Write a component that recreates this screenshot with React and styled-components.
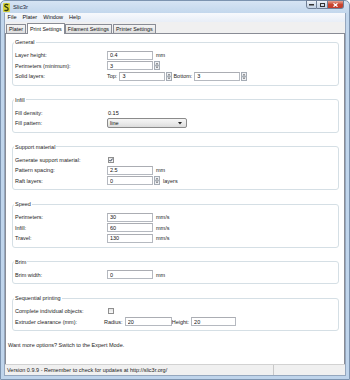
import React from 'react'
import styled, { createGlobalStyle } from 'styled-components'

const GlobalStyle = createGlobalStyle`
  html, body { margin: 0; padding: 0; background: #fff; }
  body {
    width: 350px;
    height: 380px;
    overflow: hidden;
    font-family: "Liberation Sans", Arial, sans-serif;
    color: #222;
  }
`

function AppIcon() {
    return (
        <svg width="7" height="9" viewBox="0 0 7 9">
            <rect x="0" y="0" width="7" height="9" rx="1" fill="#d8d23a" />
            <path d="M5.2 2 C4.2 1 1.6 1.2 1.8 2.9 C2 4.3 5.2 4 5.2 5.9 C5.2 7.7 2.5 8 1.5 7" fill="none" stroke="#2e3b12" strokeWidth="1.3" />
        </svg>
    )
}

function Spinner() {
    return (
        <SpinBox width="6" height="9" viewBox="0 0 6 9">
            <rect x="0.5" y="0.5" width="5" height="3.8" fill="#eef0f3" stroke="#a5acb5" />
            <rect x="0.5" y="4.7" width="5" height="3.8" fill="#eef0f3" stroke="#a5acb5" />
            <path d="M1.8 3.2 L3 1.9 L4.2 3.2 Z" fill="#333" />
            <path d="M1.8 5.8 L3 7.1 L4.2 5.8 Z" fill="#333" />
        </SpinBox>
    )
}

function Check({checked}) {
    return (
        <CheckBox>
            {checked && (
                <svg width="4" height="4" viewBox="0 0 4 4">
                    <path d="M0.4 2 L1.5 3.2 L3.6 0.6" fill="none" stroke="#1d2a45" strokeWidth="0.9" />
                </svg>
            )}
        </CheckBox>
    )
}

function Field({label, children}) {
    return (
        <Row>
            <Label>{label}</Label>
            <Controls>{children}</Controls>
        </Row>
    )
}

function App() {
    return (
        <Window>
            <GlobalStyle />
            <TitleBar>
                <AppIcon />
                <Title>Slic3r</Title>
                <WinControls>
                    <WinButton $kind="min"><svg width="5" height="3"><rect x="0" y="1" width="5" height="1.5" fill="#333" /></svg></WinButton>
                    <WinButton $kind="max"><svg width="5" height="4"><rect x="0.5" y="0.5" width="4" height="3" fill="none" stroke="#333" /></svg></WinButton>
                    <WinButton $kind="close"><svg width="5" height="4"><path d="M0.5 0.3 L4.5 3.7 M4.5 0.3 L0.5 3.7" stroke="#fff" strokeWidth="1.2" /></svg></WinButton>
                </WinControls>
            </TitleBar>
            <Client>
                <MenuBar>
                    <MenuItem>File</MenuItem>
                    <MenuItem>Plater</MenuItem>
                    <MenuItem>Window</MenuItem>
                    <MenuItem>Help</MenuItem>
                </MenuBar>
                <TabStrip>
                    <Tab>Plater</Tab>
                    <Tab $active>Print Settings</Tab>
                    <Tab>Filament Settings</Tab>
                    <Tab>Printer Settings</Tab>
                </TabStrip>
                <Panel>
                    <Group>
                        <Legend>General</Legend>
                        <Field label="Layer height:">
                            <Input defaultValue="0.4" readOnly />
                            <Unit>mm</Unit>
                        </Field>
                        <Field label="Perimeters (minimum):">
                            <Input defaultValue="3" readOnly />
                            <Spinner />
                        </Field>
                        <Field label="Solid layers:">
                            <Inline>Top:</Inline>
                            <Input defaultValue="3" readOnly />
                            <Spinner />
                            <Inline $gap={1}>Bottom:</Inline>
                            <Input defaultValue="3" readOnly />
                            <Spinner />
                        </Field>
                    </Group>
                    <Group>
                        <Legend>Infill</Legend>
                        <Field label="Fill density:">
                            <Value>0.15</Value>
                        </Field>
                        <Field label="Fill pattern:">
                            <Select>
                                <span>line</span>
                                <svg width="4" height="3" viewBox="0 0 4 3"><path d="M0 0 L4 0 L2 2.5 Z" fill="#222" /></svg>
                            </Select>
                        </Field>
                    </Group>
                    <Group>
                        <Legend>Support material</Legend>
                        <Field label="Generate support material:">
                            <Check checked />
                        </Field>
                        <Field label="Pattern spacing:">
                            <Input defaultValue="2.5" readOnly />
                            <Unit>mm</Unit>
                        </Field>
                        <Field label="Raft layers:">
                            <Input defaultValue="0" readOnly />
                            <Spinner />
                            <Unit>layers</Unit>
                        </Field>
                    </Group>
                    <Group>
                        <Legend>Speed</Legend>
                        <Field label="Perimeters:">
                            <Input defaultValue="30" readOnly />
                            <Unit>mm/s</Unit>
                        </Field>
                        <Field label="Infill:">
                            <Input defaultValue="60" readOnly />
                            <Unit>mm/s</Unit>
                        </Field>
                        <Field label="Travel:">
                            <Input defaultValue="130" readOnly />
                            <Unit>mm/s</Unit>
                        </Field>
                    </Group>
                    <Group>
                        <Legend>Brim</Legend>
                        <Field label="Brim width:">
                            <Input defaultValue="0" readOnly />
                            <Unit>mm</Unit>
                        </Field>
                    </Group>
                    <Group>
                        <Legend>Sequential printing</Legend>
                        <Field label="Complete individual objects:">
                            <Check />
                        </Field>
                        <Field label="Extruder clearance (mm):">
                            <Inline $shift={-3}>Radius:</Inline>
                            <Input $w={47} defaultValue="20" readOnly />
                            <Inline>Height:</Inline>
                            <Input $w={45} defaultValue="20" readOnly />
                        </Field>
                    </Group>
                    <Hint>Want more options? Switch to the Expert Mode.</Hint>
                </Panel>
                <StatusBar>
                    <StatusField $w={266}>Version 0.9.9 - Remember to check for updates at http://slic3r.org/</StatusField>
                    <StatusField />
                </StatusBar>
            </Client>
        </Window>
    )
}

export default App

const Window = styled.div`
    width: 350px;
    height: 380px;
    box-sizing: border-box;
    display: flex;
    flex-direction: column;
    background: linear-gradient(180deg, #d6e4f3 0px, #c1d6ec 13px, #bfd4eb 100%);
    border: 1px solid #7d94b0;
    border-radius: 5px 5px 0 0;
`
const TitleBar = styled.div`
    height: 12px;
    display: flex;
    align-items: center;
    padding-left: 2px;
`
const Title = styled.span`
    margin-left: 3px;
    font-size: 6px;
    color: #1e2a3a;
`
const WinControls = styled.div`
    margin-left: auto;
    align-self: flex-start;
    display: flex;
    padding-right: 5px;
    margin-top: -1px;
`
const WinButton = styled.div`
    width: ${props => props.$kind === 'close' ? 16 : 11}px;
    height: 9px;
    box-sizing: border-box;
    display: flex;
    align-items: center;
    justify-content: center;
    border: 1px solid #6f7f96;
    border-left-width: ${props => props.$kind === 'min' ? 1 : 0}px;
    border-radius: ${props => props.$kind === 'min' ? '0 0 0 3px' : props.$kind === 'close' ? '0 0 3px 0' : '0'};
    background: ${props => props.$kind === 'close'
        ? 'linear-gradient(180deg, #e8a493 0%, #c9462f 50%, #c43c2a 100%)'
        : 'linear-gradient(180deg, #eef3f9 0%, #d3deeb 50%, #c4d3e5 100%)'};
`
const Client = styled.div`
    flex: 1;
    margin: 0 3px 3px;
    display: flex;
    flex-direction: column;
    background: #f0f0f0;
    border: 1px solid #95a7be;
    border-top: none;
    min-height: 0;
`
const MenuBar = styled.div`
    height: 9px;
    display: flex;
    align-items: center;
    background: linear-gradient(180deg, #f7f9fc, #e8eef7);
`
const MenuItem = styled.span`
    padding: 0 3px 0 2.5px;
    margin-right: 0.5px;
    font-size: 5.6px;
    line-height: 9px;
    color: #111;
`
const TabStrip = styled.div`
    height: 11px;
    display: flex;
    align-items: flex-end;
    padding-left: 1px;
    background: #f0f0f0;
`
const Tab = styled.div`
    position: relative;
    height: ${props => props.$active ? 11 : 9}px;
    margin-bottom: ${props => props.$active ? -1 : 0}px;
    margin-right: ${props => props.$active ? 0 : 1}px;
    box-sizing: border-box;
    padding: 0 2px;
    display: flex;
    align-items: center;
    font-size: 5.35px;
    color: #111;
    white-space: nowrap;
    border: 1px solid #898c95;
    border-bottom: none;
    border-radius: 1px 1px 0 0;
    background: ${props => props.$active ? '#fff' : 'linear-gradient(180deg, #f3f3f3 0%, #ebebeb 50%, #dddddd 100%)'};
    z-index: ${props => props.$active ? 1 : 0};
`
const Panel = styled.div`
    flex: 1;
    background: #fff;
    border: 1px solid #898c95;
    border-bottom: none;
    padding: 4px 0 0 2px;
    min-height: 0;
`
const Group = styled.fieldset`
    margin: 0 5px 10px 4px;
    padding: 4px 4px 3px 2px;
    border: 1px solid #d5dfe5;
    border-radius: 3px;
    min-inline-size: 0;
`
const Legend = styled.legend`
    padding: 0 1px;
    margin-left: -1px;
    font-size: 5.5px;
    line-height: 8px;
    color: #1e1e1e;
`
const Row = styled.div`
    height: 10.5px;
    display: grid;
    grid-template-columns: 92px auto;
    align-items: center;
`
const Label = styled.span`
    font-size: 5.5px;
    white-space: nowrap;
    color: #1e1e1e;
`
const Controls = styled.div`
    display: flex;
    align-items: center;
`
const Input = styled.input`
    width: ${props => props.$w || 46}px;
    height: 9px;
    box-sizing: border-box;
    margin: 0;
    padding: 0 2px;
    border: 1px solid #b5b9c0;
    border-top-color: #abadb3;
    background: #fff;
    font-family: inherit;
    font-size: 5.5px;
    color: #111;
    outline: none;
`
const SpinBox = styled.svg`
    margin-left: 1px;
    flex: none;
`
const Unit = styled.span`
    margin-left: 3px;
    font-size: 5.5px;
    color: #1e1e1e;
`
const Inline = styled.span`
    margin-left: ${props => props.$shift || props.$gap || 0}px;
    margin-right: 2px;
    font-size: 5.5px;
    white-space: nowrap;
    color: #1e1e1e;
`
const Value = styled.span`
    margin-left: 1px;
    font-size: 5.5px;
    color: #111;
`
const Select = styled.div`
    width: 80px;
    height: 10px;
    box-sizing: border-box;
    display: flex;
    align-items: center;
    justify-content: space-between;
    padding: 0 4px 0 2px;
    border: 1px solid #8b8b8b;
    border-radius: 2px;
    background: linear-gradient(180deg, #f5f5f5 0%, #ebebeb 50%, #dcdcdc 100%);
    font-size: 5.5px;
    color: #111;
`
const CheckBox = styled.span`
    width: 6px;
    height: 6px;
    margin-left: 1px;
    box-sizing: border-box;
    display: flex;
    align-items: center;
    justify-content: center;
    border: 1px solid #8f8f8f;
    background: linear-gradient(180deg, #e4e4e4, #fafafa);
`
const Hint = styled.div`
    margin-top: 10px;
    font-size: 5.5px;
    line-height: 8px;
    color: #1e1e1e;
`
const StatusBar = styled.div`
    height: 11px;
    box-sizing: border-box;
    display: flex;
    border-top: 1px solid #d2d2d2;
    background: #f0f0f0;
`
const StatusField = styled.div`
    width: ${props => props.$w ? props.$w + 'px' : 'auto'};
    flex: ${props => props.$w ? 'none' : 1};
    padding-left: 2px;
    font-size: 5.5px;
    line-height: 10px;
    color: #222;
    white-space: nowrap;
    border-right: ${props => props.$w ? '1px solid #c8c8c8' : 'none'};
`
